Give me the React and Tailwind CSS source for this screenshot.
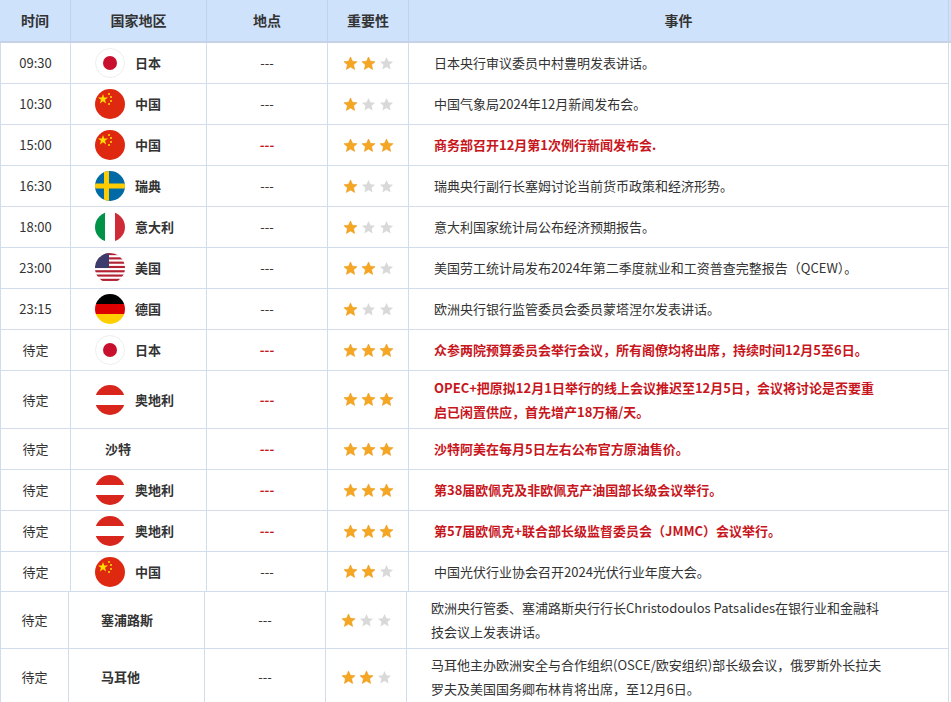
import React from "react";

const Star = ({ on }) => (
  <svg width="15" height="15" viewBox="0 0 24 24"><path d="M12 1.5l3.1 6.9 7.4.7-5.6 5 1.7 7.4L12 17.6l-6.6 3.9 1.7-7.4-5.6-5 7.4-.7z" fill={on ? "#f5a623" : "#d9d9d9"} stroke={on ? "#e8930c" : "none"} strokeWidth="0.8"/></svg>
);

const Flag = ({ c }) => {
  let inner = null;
  if (c === "jp") inner = (<><rect width="30" height="30" fill="#fff"/><circle cx="15" cy="15" r="7" fill="#c8102e"/></>);
  if (c === "cn") inner = (<><rect width="30" height="30" fill="#de2910"/><polygon points="8,5 9.2,8.6 13,8.6 10,10.8 11.1,14.4 8,12.2 4.9,14.4 6,10.8 3,8.6 6.8,8.6" fill="#ffde00"/><circle cx="14" cy="5" r="1" fill="#ffde00"/><circle cx="16" cy="8" r="1" fill="#ffde00"/><circle cx="16" cy="12" r="1" fill="#ffde00"/><circle cx="14" cy="15" r="1" fill="#ffde00"/></>);
  if (c === "se") inner = (<><rect width="30" height="30" fill="#006aa7"/><rect x="9" width="5" height="30" fill="#fecc00"/><rect y="12.5" width="30" height="5" fill="#fecc00"/></>);
  if (c === "it") inner = (<><rect width="10" height="30" fill="#009246"/><rect x="10" width="10" height="30" fill="#fff"/><rect x="20" width="10" height="30" fill="#ce2b37"/></>);
  if (c === "us") inner = (<><rect width="30" height="30" fill="#fff"/>{[...Array(7)].map((_, i) => <rect key={i} y={i * 4.3} width="30" height="2.15" fill="#b22234"/>)}<rect width="14" height="15" fill="#3c3b6e"/></>);
  if (c === "de") inner = (<><rect width="30" height="10" fill="#000"/><rect y="10" width="30" height="10" fill="#dd0000"/><rect y="20" width="30" height="10" fill="#ffce00"/></>);
  if (c === "at") inner = (<><rect width="30" height="10" fill="#d8261c"/><rect y="10" width="30" height="10" fill="#fff"/><rect y="20" width="30" height="10" fill="#d8261c"/></>);
  return (
    <svg width="30" height="30" viewBox="0 0 30 30" className="shrink-0">
      <defs><clipPath id={"cp" + c}><circle cx="15" cy="15" r="15"/></clipPath></defs>
      <g clipPath={`url(#cp${c})`}>{inner}</g>
      {c === "jp" && <circle cx="15" cy="15" r="14.5" fill="none" stroke="#eee"/>}
    </svg>
  );
};

const rows = [
  ["09:30", "jp", "日本", 2, false, ["日本央行审议委员中村豊明发表讲话。"], 41],
  ["10:30", "cn", "中国", 1, false, ["中国气象局2024年12月新闻发布会。"], 41],
  ["15:00", "cn", "中国", 3, true, ["商务部召开12月第1次例行新闻发布会."], 41],
  ["16:30", "se", "瑞典", 1, false, ["瑞典央行副行长塞姆讨论当前货币政策和经济形势。"], 41],
  ["18:00", "it", "意大利", 1, false, ["意大利国家统计局公布经济预期报告。"], 41],
  ["23:00", "us", "美国", 2, false, ["美国劳工统计局发布2024年第二季度就业和工资普查完整报告（QCEW）。"], 41],
  ["23:15", "de", "德国", 1, false, ["欧洲央行银行监管委员会委员蒙塔涅尔发表讲话。"], 41],
  ["待定", "jp", "日本", 3, true, ["众参两院预算委员会举行会议，所有阁僚均将出席，持续时间12月5至6日。"], 41],
  ["待定", "at", "奥地利", 3, true, ["OPEC+把原拟12月1日举行的线上会议推迟至12月5日，会议将讨论是否要重", "启已闲置供应，首先增产18万桶/天。"], 58],
  ["待定", null, "沙特", 3, true, ["沙特阿美在每月5日左右公布官方原油售价。"], 41],
  ["待定", "at", "奥地利", 3, true, ["第38届欧佩克及非欧佩克产油国部长级会议举行。"], 41],
  ["待定", "at", "奥地利", 3, true, ["第57届欧佩克+联合部长级监督委员会（JMMC）会议举行。"], 41],
  ["待定", "cn", "中国", 2, false, ["中国光伏行业协会召开2024光伏行业年度大会。"], 40],
];

const rows2 = [
  ["待定", "塞浦路斯", 1, ["欧洲央行管委、塞浦路斯央行行长Christodoulos Patsalides在银行业和金融科", "技会议上发表讲话。"], 57],
  ["待定", "马耳他", 2, ["马耳他主办欧洲安全与合作组织(OSCE/欧安组织)部长级会议，俄罗斯外长拉夫", "罗夫及美国国务卿布林肯将出席，至12月6日。"], 57],
];

const B = "border-r border-b border-[#d3dcea]";
const RED = "text-[#c8161d] font-bold";

export default function App() {
  return (
    <div className="w-[951px] h-[702px] overflow-hidden bg-white text-[13px] text-[#333]" style={{ fontFamily: '"Noto Sans CJK SC", "Noto Sans", sans-serif' }}>
      <div className="flex h-[43px] bg-[#cfe2fb] border-b-2 border-[#c6d3e6] text-[#333] text-[14px] font-bold">
        <div className="w-[71px] flex items-center justify-center border-r border-[#c0d3ee]">时间</div>
        <div className="w-[136px] flex items-center justify-center border-r border-[#c0d3ee]">国家地区</div>
        <div className="w-[121px] flex items-center justify-center border-r border-[#c0d3ee]">地点</div>
        <div className="w-[81px] flex items-center justify-center border-r border-[#c0d3ee]">重要性</div>
        <div className="w-[540px] flex items-center justify-center border-r border-[#c0d3ee]">事件</div>
      </div>
      {rows.map((r, i) => (
        <div key={i} className="flex" style={{ height: r[6] }}>
          <div className={`w-[71px] flex items-center justify-center border-l ${B}`}>{r[0]}</div>
          <div className={`w-[136px] flex items-center gap-[10px] ${r[1] ? "pl-[24px]" : "pl-[34px]"} font-bold ${B}`}>{r[1] && <Flag c={r[1]} />}{r[2]}</div>
          <div className={`w-[121px] flex items-center justify-center ${B} ${r[4] ? RED : ""}`}>---</div>
          <div className={`w-[81px] flex items-center justify-center gap-[3px] ${B}`}>{[1, 2, 3].map(k => <Star key={k} on={k <= r[3]} />)}</div>
          <div className={`w-[540px] flex flex-col justify-center pl-[25px] leading-[24px] ${B} ${r[4] ? RED : ""}`}>{r[5].map((t, j) => <div key={j}>{t}</div>)}</div>
        </div>
      ))}
      {rows2.map((r, i) => (
        <div key={i} className="flex" style={{ height: r[4] }}>
          <div className={`w-[69px] flex items-center justify-center border-l ${B}`}>{r[0]}</div>
          <div className={`w-[136px] flex items-center pl-[32px] font-bold ${B}`}>{r[1]}</div>
          <div className={`w-[121px] flex items-center justify-center ${B}`}>---</div>
          <div className={`w-[81px] flex items-center justify-center gap-[3px] ${B}`}>{[1, 2, 3].map(k => <Star key={k} on={k <= r[2]} />)}</div>
          <div className={`w-[542px] flex flex-col justify-center pl-[24px] leading-[24px] ${B}`}>{r[3].map((t, j) => <div key={j}>{t}</div>)}</div>
        </div>
      ))}
    </div>
  );
}
